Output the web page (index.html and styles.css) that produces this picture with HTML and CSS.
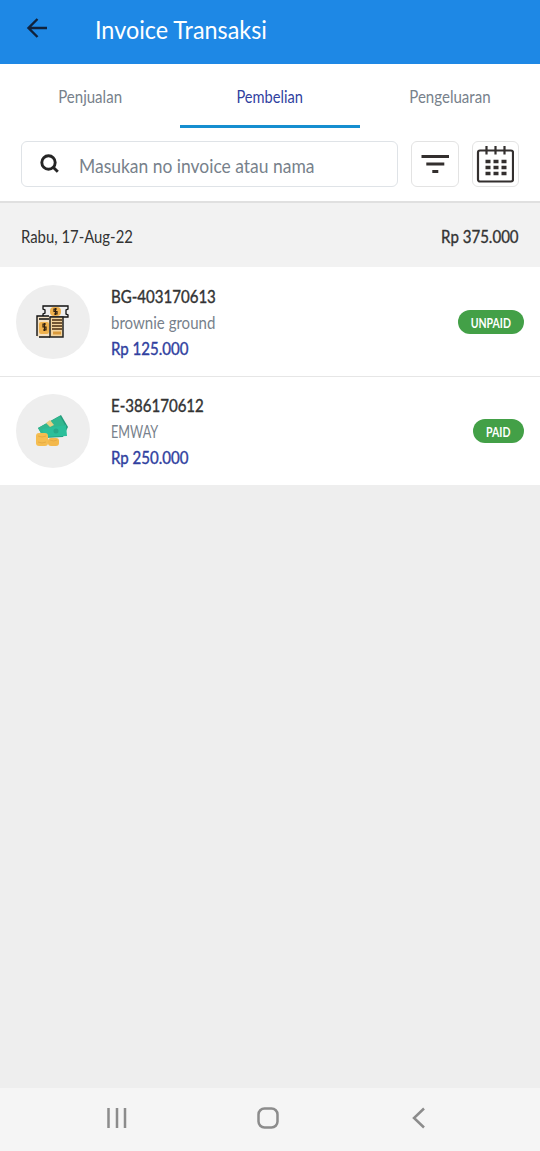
FILE: index.html
```html
<!DOCTYPE html>
<html lang="id">
<head>
<meta charset="utf-8">
<title>Invoice Transaksi</title>
<link rel="stylesheet" href="styles.css">
</head>
<body>
<header class="appbar">
  <svg class="back" width="24" height="24" viewBox="0 0 24 24"><path d="M21 12H3M11.500 3L2.500 12l9 9"/></svg>
  <h1 class="title"><span class="t">Invoice Transaksi</span></h1>
</header>
<nav class="tabs">
  <a class="tab"><span class="t">Penjualan</span></a>
  <a class="tab active"><span class="t">Pembelian</span></a>
  <a class="tab"><span class="t">Pengeluaran</span></a>
</nav>
<section class="tools">
  <div class="search">
    <svg width="20" height="20" viewBox="0 0 20 20"><circle cx="8.5" cy="8.5" r="6.7"/><path d="M13.2 13.2l4.600 4.600"/></svg>
    <span class="t">Masukan no invoice atau nama</span>
  </div>
  <div class="tool"><svg width="28" height="20" viewBox="0 0 28 20"><path d="M.5 2.500H28M5.300 10h18M11.300 17.500h6" stroke-width="2.800"/></svg></div>
  <div class="tool"><svg width="38" height="38" viewBox="0 0 38 38"><rect x="2" y="5.500" width="35" height="31" rx="2" stroke-width="2.200"/><path d="M10.500 1v8.500M19.500 1v8.500M28.500 1v8.500" stroke-width="2.200"/><path d="M9.500 16.500h21M9.500 22.500h21M9.500 28.500h21" stroke-width="3.300" stroke-dasharray="5 3"/></svg></div>
</section>
<section class="day">
  <span class="t date">Rabu, 17-Aug-22</span><span class="t total">Rp 375.000</span>
</section>
<main class="list">
  <article class="item">
    <div class="avatar"><svg width="34" height="34" viewBox="0 0 34 34">
      <path d="M7 1h25v3l-2 1v4l2 1v2H7v-3l2-1V5L7 4z" fill="#eee" stroke="#111" stroke-width="1.300"/>
      <rect x="14" y="2" width="11" height="9" rx="4" fill="#efb14d"/>
      <path d="M1 11h13v21H1z" fill="#f3e1c5"/><path d="M14 32H3M1 31V11h12M3 14h10" stroke="#111" stroke-width="1.400"/>
      <rect x="3" y="17" width="10" height="12" rx="2" fill="#efb14d"/>
      <path d="M14 12h13v20H14z" fill="#f3d49d" stroke="#222" stroke-width="1.500"/>
      <path d="M16 15h10M16 18h10M16 21h10M16 24h10" stroke="#4a2d12" stroke-width="1.700"/><path d="M17 28h8" stroke="#d99a3c" stroke-width="3"/>
      <path d="M21 4h-3v2.500h3V9h-3M19.500 3v7M10 19H7v3h3v3H7M8.500 18v8" stroke="#302010" stroke-width="1.200"/>
    </svg></div>
    <div class="info"><span class="code"><span class="t">BG-403170613</span></span><span class="name"><span class="t">brownie ground</span></span><span class="price"><span class="t">Rp 125.000</span></span></div>
    <span class="badge unpaid"><span class="t">UNPAID</span></span>
  </article>
  <article class="item">
    <div class="avatar"><svg width="34" height="34" viewBox="0 0 34 34">
      <path d="M2 14L25 1l7 12-5 10L8 24z" fill="#239b7b"/>
      <path d="M2 14L24 2l5 9-22 12z" fill="#31b78f"/><path d="M6 15l24-4 1 11-22 1z" fill="#2bbf9a"/>
      <path d="M10 9l4-3 4 5-4 2z" fill="#e8cf83"/><circle cx="20" cy="17" r="2.500" fill="#27a888"/>
      <rect x="0" y="19" width="12" height="13" rx="3" fill="#f5bd50"/><rect x="12" y="24" width="11" height="8" rx="3" fill="#f3b84b"/>
      <path d="M2 22q4 2 8 0M2 28q4 2 8 0M14 26q4 2 7 0" stroke="#e2a640" stroke-width=".8"/>
    </svg></div>
    <div class="info"><span class="code"><span class="t">E-386170612</span></span><span class="name upper"><span class="t">EMWAY</span></span><span class="price"><span class="t">Rp 250.000</span></span></div>
    <span class="badge paid"><span class="t">PAID</span></span>
  </article>
</main>
<footer class="sysnav">
  <svg width="20" height="22" viewBox="0 0 20 22"><path d="M1.500 1v20M10 1v20M18 1v20"/></svg>
  <svg class="home" width="22" height="22" viewBox="0 0 22 22"><rect x="1.500" y="1.500" width="19" height="19" rx="6"/></svg>
  <svg width="14" height="22" viewBox="0 0 14 22"><path d="M12 1.500L2 11l10 9.500"/></svg>
</footer>
</body>
</html>
```
FILE: styles.css
```css
*{box-sizing:border-box}
body{margin:0;height:1151px;display:flex;flex-direction:column;background:#eee;font-family:Lato,sans-serif;color:#333;overflow:hidden}
svg{display:block;fill:none}
/* Condensed lettering */
.t{display:inline-block;white-space:nowrap;transform:scaleX(.885);transform-origin:left}
.appbar{height:64px;background:#1e88e5;display:flex;padding:15px 26px}
.back{stroke:#10223c;stroke-width:2.4;margin-top:1px}
.title{margin:0 0 0 45px;font-size:25px;line-height:28px;font-weight:400;color:#fff}
.title .t{transform:scaleX(.935)}
.tabs{display:flex;height:64px;background:#fff}
.tab{flex:1;text-align:center;font-size:17px;line-height:66px;color:#77818b}
.tab .t{transform-origin:center}
.active{color:#303f9f;border-bottom:3px solid #168ed0}
.active .t{transform:scaleX(.86)}
.tools{display:flex;gap:13px;height:75px;padding:13px 21px 14px;background:#fff;border-bottom:2px solid #e0e0e0}
.search{flex:1;display:flex;align-items:center;border:1px solid #dfe3e7;border-radius:6px;padding-left:18px;gap:19px;font-size:20px;color:#77818b}
.search svg{stroke:#252525;stroke-width:2.900}
.search .t{transform:scaleX(.873);margin-top:2px}
.tool{width:47.500px;display:flex;align-items:center;justify-content:center;border:1px solid #e3e3e3;border-radius:6px}
.tool svg{stroke:#332f2e;flex:none}
.day{height:64px;background:#f2f2f2;display:flex;justify-content:space-between;align-items:center;padding:3px 21px 0;font-size:17px}
.date{transform:scaleX(.875)}
.total{transform-origin:right;-webkit-text-stroke:.35px currentColor}
.item{height:109px;display:flex;align-items:center;background:#fff;padding:1px 16px 0}
.item + .item{border-top:1px solid #e6e6e6;padding-top:0;height:109px}
.avatar{width:74px;height:74px;border-radius:50%;background:#eee;display:flex;align-items:center;justify-content:center}
.info{flex:1;margin:2px 0 0 21px;display:flex;flex-direction:column;font-size:17px;line-height:26px}
.code,.price{-webkit-text-stroke:.4px currentColor}
.name{color:#77818b}
.upper .t{transform:scaleX(.745)}
.price{color:#303f9f}
.badge{height:24px;border-radius:12px;background:#43a047;color:#fff;font-size:14px;font-weight:700;line-height:25px;display:flex;justify-content:center}
.badge .t{transform:scaleX(.75);transform-origin:center}
.unpaid{width:66px}
.paid{width:51px}
.sysnav{margin-top:auto;height:63px;background:#f5f5f5;display:flex;align-items:center;justify-content:space-between;padding:0 114px 3px 107px}
.sysnav svg{stroke:#8c8c8c;stroke-width:2.500}
.home{margin-right:4px}
```
